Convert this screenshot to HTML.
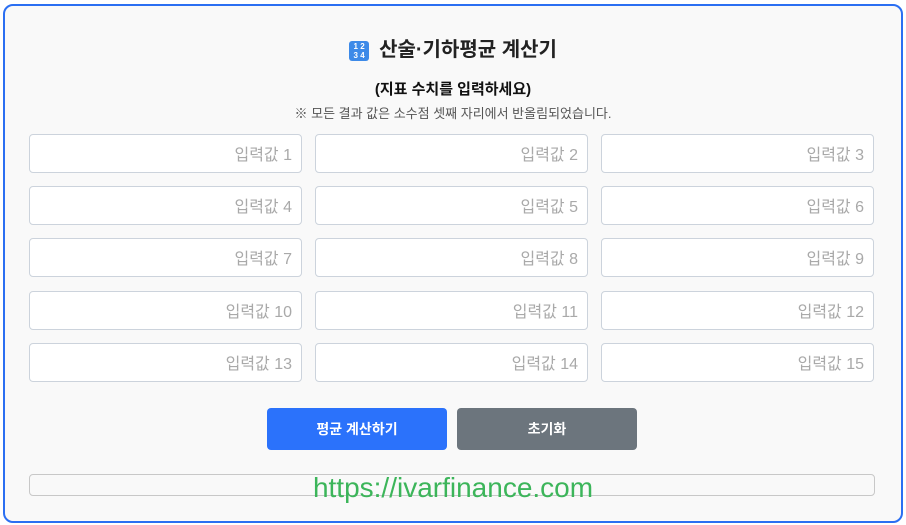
<!DOCTYPE html>
<html><head><meta charset="utf-8"><style>
body{margin:0;width:906px;height:525px;background:#fff;font-family:"Liberation Sans","Noto Sans CJK KR",sans-serif;position:relative;overflow:hidden}
.box{position:absolute;left:3px;top:4px;width:896px;height:515px;border:2px solid #2b6ff2;border-radius:10px;background:#f9f9f9}
.t{position:absolute;left:0;width:906px;text-align:center}
.in{position:absolute;width:271px;height:37px;border:1px solid #ccd3dc;border-radius:4px;background:#fff;box-sizing:content-box;text-align:right;font-size:16px;color:#a9a9a9;line-height:41px}
.in span{padding-right:9px}
.btn{position:absolute;top:408px;width:180px;height:42px;border-radius:4px;color:#fff;font-weight:bold;font-size:14px;text-align:center;line-height:42px}
</style></head><body>
<div class="box"></div>
<div class="t" style="top:33px;font-size:20px;font-weight:bold;color:#222"><span style="display:inline-block;width:20px;height:20px;background:#3d8ae8;border-radius:3px;color:#fff;font-size:8px;line-height:9px;vertical-align:-2px;margin-right:10px;padding-top:1px;box-sizing:border-box">1 2<br>3 4</span>산술·기하평균 계산기</div>
<div class="t" style="top:78px;font-size:15px;font-weight:bold;color:#111">(지표 수치를 입력하세요)</div>
<div class="t" style="top:103px;font-size:13px;color:#555">※ 모든 결과 값은 소수점 셋째 자리에서 반올림되었습니다.</div>
<div class="in" style="left:29px;top:134px"><span>입력값 1</span></div>
<div class="in" style="left:315px;top:134px"><span>입력값 2</span></div>
<div class="in" style="left:601px;top:134px"><span>입력값 3</span></div>
<div class="in" style="left:29px;top:186px"><span>입력값 4</span></div>
<div class="in" style="left:315px;top:186px"><span>입력값 5</span></div>
<div class="in" style="left:601px;top:186px"><span>입력값 6</span></div>
<div class="in" style="left:29px;top:238px"><span>입력값 7</span></div>
<div class="in" style="left:315px;top:238px"><span>입력값 8</span></div>
<div class="in" style="left:601px;top:238px"><span>입력값 9</span></div>
<div class="in" style="left:29px;top:291px"><span>입력값 10</span></div>
<div class="in" style="left:315px;top:291px"><span>입력값 11</span></div>
<div class="in" style="left:601px;top:291px"><span>입력값 12</span></div>
<div class="in" style="left:29px;top:343px"><span>입력값 13</span></div>
<div class="in" style="left:315px;top:343px"><span>입력값 14</span></div>
<div class="in" style="left:601px;top:343px"><span>입력값 15</span></div>
<div class="btn" style="left:267px;background:#2b72fb">평균 계산하기</div>
<div class="btn" style="left:457px;background:#6c757d">초기화</div>
<div style="position:absolute;left:29px;top:474px;width:844px;height:20px;border:1px solid #c8c8c8;border-radius:4px;background:#f9f9f9"></div>
<div class="t" style="top:472px;font-size:28px;color:#3cb55a;font-family:'Liberation Sans Narrow','Liberation Sans',sans-serif">https://ivarfinance.com</div>
</body></html>
